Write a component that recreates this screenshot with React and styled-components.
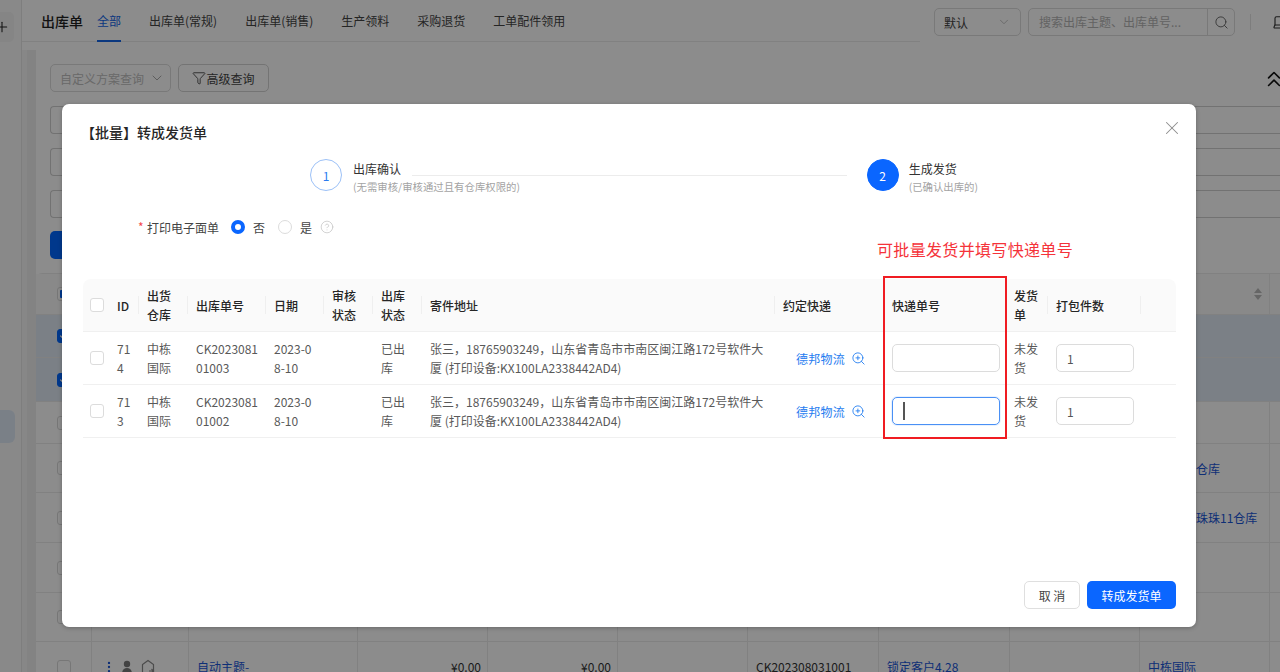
import React from "react";
import styled, { createGlobalStyle } from "styled-components";
import { Plus, ChevronDown, Search, Filter, ChevronsUp, Laptop, X, CircleHelp, ZoomIn, EllipsisVertical, Check } from "lucide-react";

const Global = createGlobalStyle`
  html, body { margin: 0; padding: 0; height: 100%; background: #fff; }
  * { box-sizing: border-box; }
  body { font-family: "Noto Sans CJK SC", "Noto Sans", sans-serif; font-size: 12px; color: #333; }
`;

const Page = styled.div`
  position: relative; width: 1280px; height: 672px; overflow: hidden;
  display: flex; background: #fff;
`;
const Rail = styled.aside`
  width: 22px; flex: none; display: flex; flex-direction: column;
  background: #fafafa; border-right: 1px solid #e6e6e6;
`;
const AddBox = styled.div`
  width: 14px; height: 30px; margin-top: 12px; display: flex; align-items: center;
  background: #f2f2f2; border-radius: 0 5px 5px 0; color: #222;
  svg { margin-left: -6px; flex: none; }
`;
const NavActive = styled.div`
  width: 15px; height: 33px; margin-top: 368px; background: #dfeaf6; border-radius: 0 6px 6px 0;
`;
const Main = styled.div`flex: 1; min-width: 0; display: flex; flex-direction: column; background: #f6f6f6;`;
const TopBar = styled.header`display: flex; height: 50px; background: #fff; flex: none; overflow: hidden;`;
const TabArea = styled.div`
  width: 898px; flex: none; height: 42px; padding-left: 19px; display: flex; align-items: flex-start;
  border-bottom: 1px solid #ececec;
`;
const PageTitle = styled.div`font-size: 14px; font-weight: 500; line-height: 42px; color: #222; margin-right: 14px;`;
const Tabs = styled.nav`display: flex; gap: 28px;`;
const Tab = styled.div`
  height: 42px; line-height: 42px; font-size: 12px; color: ${p => (p.$active ? "#1466e8" : "#444")};
  border-bottom: 2px solid ${p => (p.$active ? "#1466e8" : "transparent")};
`;
const TopTools = styled.div`display: flex; align-items: flex-start; padding: 8px 0 0 14px; gap: 7px; flex: none;`;
const Select = styled.div`
  width: 87px; height: 28px; border: 1px solid #dcdcdc; border-radius: 5px; display: flex;
  align-items: center; justify-content: space-between; padding: 0 9px; color: #444; font-size: 12px;
  svg { color: #aaa; }
`;
const SearchBox = styled.div`
  width: 207px; height: 28px; border: 1px solid #dcdcdc; border-radius: 5px; display: flex; align-items: stretch;
`;
const SearchText = styled.div`flex: 1; line-height: 26px; padding-left: 10px; color: #b5b5b5; font-size: 12px; border-right: 1px solid #dcdcdc; white-space: nowrap; overflow: hidden;`;
const SearchBtn = styled.div`width: 26px; display: flex; align-items: center; justify-content: center; color: #666;`;
const Divider = styled.div`width: 1px; height: 16px; margin: 6px 14px 0 8px; background: #e4e4e4;`;
const TopIcon = styled.div`color: #333; margin-top: 5px; flex: none;`;

const Panel = styled.section`
  flex: 1; margin-left: 5px; background: #fff; display: flex; flex-direction: column; min-height: 0;
  border-left: 9px solid #eeeeee;
`;
const Filters = styled.div`padding: 14px 0 0 14px; display: flex; flex-direction: column; flex: none;`;
const FilterTop = styled.div`display: flex; align-items: center; gap: 7px; height: 28px;`;
const SchemeSelect = styled.div`
  width: 121px; height: 28px; border: 1px solid #dcdcdc; border-radius: 5px; display: flex; align-items: center;
  justify-content: space-between; padding: 0 5px 0 9px; color: #c0c0c0; font-size: 12px;
`;
const AdvancedBtn = styled.div`
  width: 91px; height: 28px; border: 1px solid #d4d4d4; border-radius: 5px; display: flex; align-items: center;
  justify-content: center; color: #444; font-size: 12px;
`;
const Collapse = styled.div`margin-left: auto; color: #111; height: 26px; margin-right: -7px; margin-top: 2px;`;
const FieldRow = styled.div`height: 28px; margin-top: 14px; border: 1px solid #cfcfcf; border-right: 0; border-radius: 4px 0 0 4px; background: #fff;`;
const PrimaryGhost = styled.div`width: 60px; height: 28px; margin-top: 13px; border-radius: 5px; background: #0066ff;`;

const BgTable = styled.div`margin-top: 14px; display: flex; flex-direction: column; border-top: 1px solid #ececec; border-radius: 6px 0 0 0;`;
const BgRow = styled.div`
  display: grid; flex: none; height: ${p => p.$h}px;
  grid-template-columns: 56px 97px 169px 130px 130px 130px 131px 131px 130px 130px 10px;
  background: ${p => (p.$sel ? "#e0eaf4" : p.$head ? "#fafafa" : "#fff")};
  border-bottom: ${p => (p.$noLine ? "0" : "1px solid #ececec")};
`;
const BgCell = styled.div`
  display: flex; align-items: center; padding: ${p => (p.$flush ? "0" : p.$right ? "0 6px 0 8px" : "0 8px")}; white-space: nowrap; font-size: 12px; min-width: 0;
  justify-content: ${p => (p.$right ? "flex-end" : "flex-start")};
  color: ${p => (p.$link ? "#1a56d8" : "#333")};
  border-right: ${p => (p.$sel ? "0" : "1px solid #ececec")};
  gap: 8px;
`;
const BgCheck = styled.div`
  width: 14px; height: 14px; border-radius: 3px; margin-left: 21px; flex: none; display: flex; align-items: center; justify-content: center;
  border: 1px solid ${p => (p.$on ? "#0066ff" : "#d9d9d9")}; color: #fff;
  background: ${p => (p.$on ? "#0066ff" : "#fff")};
`;
const MixedDot = styled.span`width: 8px; height: 8px; border-radius: 1px; background: #0066ff;`;
const SortMark = styled.div`display: flex; flex-direction: column; gap: 2px; margin-left: auto; margin-right: 5px;`;
const SortTri = styled.i`
  display: block; width: 0; height: 0; border: 4px solid transparent; border-bottom-width: ${p => (p.$up ? "5px" : "0")};
  border-top-width: ${p => (p.$up ? "0" : "5px")};
  border-bottom-color: ${p => (p.$up ? "#bbb" : "transparent")}; border-top-color: ${p => (p.$up ? "transparent" : "#bbb")};
`;
const RowIcons = styled.div`
  display: flex; align-items: center; gap: 5px; margin-left: 10px; color: #777;
  svg:last-child { margin-left: 3px; }
`;

const Overlay = styled.div`position: absolute; inset: 0; background: rgba(0, 0, 0, 0.45);`;
const Modal = styled.div`
  position: relative; width: 1134px; height: 523px; margin: 104px 0 0 62px; background: #fff; border-radius: 7px;
  padding: 20px 20px 18px 21px; display: flex; flex-direction: column;
  box-shadow: 0 1px 4px rgba(0, 0, 0, 0.25);
`;
const ModalHead = styled.div`display: flex; justify-content: space-between; align-items: flex-start; height: 16px;`;
const ModalTitle = styled.h2`margin: 0 0 0 -2px; font-size: 14px; line-height: 16px; font-weight: 500; color: #262626;`;
const CloseBtn = styled.div`margin: -7px -7px 0 0; height: 22px; color: #8c8c8c; svg { display: block; }`;
const Steps = styled.div`margin: 19px 0 0 227px; width: 668px; display: flex; flex: none;`;
const Step = styled.div`display: flex; gap: ${p => (p.$grow ? 11 : 10)}px; flex: ${p => (p.$grow ? 1 : "none")}; margin-right: ${p => (p.$grow ? "20px" : "0")};`;
const StepDot = styled.div`
  width: 32px; height: 32px; border-radius: 50%; flex: none; display: flex; align-items: center; justify-content: center;
  font-size: 12px; background: ${p => (p.$on ? "#0a66ff" : "#fff")}; color: ${p => (p.$on ? "#fff" : "#2a7bf0")};
  border: 1px solid ${p => (p.$on ? "#0a66ff" : "#9cc1f7")};
`;
const StepText = styled.div`flex: 1; min-width: 0; display: flex; flex-direction: column;`;
const StepTitleRow = styled.div`display: flex; height: 20px; gap: 11px;`;
const StepTitle = styled.div`font-size: 12px; line-height: 20px; color: #333; white-space: nowrap;`;
const StepLine = styled.div`flex: 1; height: 1px; margin-top: 16px; background: #ececec;`;
const StepSub = styled.div`font-size: 10.4px; line-height: 14px; margin-top: 1px; color: #a3a3a3; white-space: nowrap;`;

const PrintRow = styled.div`margin: 23px 0 0 55px; height: 20px; display: flex; align-items: center; font-size: 12px; color: #444; flex: none;`;
const Req = styled.span`color: #f5484c; width: 9px; font-size: 12px; line-height: 20px;`;
const PrintLabel = styled.span`margin-right: 12px;`;
const Radio = styled.span`
  width: 14px; height: 14px; border-radius: 50%; flex: none; background: #fff; margin-right: 8px;
  border: ${p => (p.$on ? "4px solid #0a66ff" : "1px solid #dcdcdc")};
`;
const RadioText = styled.span`margin-right: ${p => p.$gap}px; color: #444;`;
const Help = styled.span`display: flex; color: #c0c0c0;`;

const DataTable = styled.table`
  margin-top: 42px; width: 1093px; table-layout: fixed; border-collapse: separate; border-spacing: 0; flex: none;
  font-size: 12px; line-height: 19px;
`;
const Th = styled.th`
  position: relative; height: 53px; padding: 0 8px; background: #fafafa; text-align: left; font-weight: 500; color: #262626;
  border-bottom: 1px solid #f0f0f0;
  &:first-child { border-radius: 8px 0 0 0; padding: 0 0 0 7px; }
  &:last-child { border-radius: 0 8px 0 0; }
  &::after {
    content: ""; position: absolute; right: 0; top: 17px; height: 18px; width: 1px;
    background: ${p => (p.$sep ? "#efefef" : "transparent")};
  }
`;
const Td = styled.td`
  height: 53px; padding: ${p => (p.$flush ? "0 0 0 7px" : p.$tight ? "0 6px 0 8px" : "0 8px")}; color: #595959; word-break: break-all;
  border-bottom: 1px solid #f0f0f0; text-align: ${p => (p.$center ? "center" : "left")};
`;
const Box = styled.span`display: block; width: 14px; height: 14px; border: 1px solid #dcdcdc; border-radius: 3px; background: #fff;`;
const Courier = styled.span`display: inline-flex; align-items: center; gap: 6px; padding-left: 3px; color: #1f7cf0; letter-spacing: 0.2px; svg { color: #1f7cf0; }`;
const InputBox = styled.div`
  width: ${p => p.$w}px; height: 28px; border-radius: 5px; display: flex; align-items: center; padding-left: 10px; color: #555;
  border: 1px solid ${p => (p.$focus ? "#4a90f5" : "#dcdcdc")}; background: #fff;
  box-shadow: ${p => (p.$focus ? "0 0 0 1px rgba(74, 144, 245, 0.12)" : "none")};
`;
const Caret = styled.span`width: 2px; height: 18px; background: #555;`;

const Annotation = styled.div`
  position: absolute; left: 815px; top: 134px; font-size: 16px; line-height: 22px; letter-spacing: 0.33px; color: #f5333a; white-space: nowrap;
`;
const RedFrame = styled.div`position: absolute; left: 821px; top: 172px; width: 124px; height: 163px; border: 2px solid #f01c22; pointer-events: none;`;

const Footer = styled.div`margin-top: auto; display: flex; justify-content: flex-end; gap: 7px; flex: none;`;
const FootBtn = styled.div`
  height: 28px; border-radius: 5px; display: flex; align-items: center; justify-content: center; font-size: 12px;
  width: ${p => p.$w}px; color: ${p => (p.$primary ? "#fff" : "#444")};
  background: ${p => (p.$primary ? "#0a66ff" : "#fff")};
  border: ${p => (p.$primary ? "0" : "1px solid #dfdfdf")};
`;
const SortSpot = styled.div`position: absolute; left: 1254px; top: 288px;`;

const widths = [26, 30, 49, 78, 58, 49, 49, 353, 109, 122, 42, 93, 35];
const heads = ["ID", "出货仓库", "出库单号", "日期", "审核状态", "出库状态", "寄件地址", "约定快递", "快递单号", "发货单", "打包件数", ""];
const addr = "张三，18765903249，山东省青岛市市南区闽江路172号软件大厦 (打印设备:KX100LA2338442AD4)";
const rows = [
  { id: "714", no: "CK202308101003" },
  { id: "713", no: "CK202308101002", focus: true },
];
const bgRows = [
  { h: 41, head: true },
  { h: 43, sel: true },
  { h: 44, sel: true },
  { h: 42 },
  { h: 49, warehouse: "中栋国际仓库" },
  { h: 50, warehouse: "珠珠珠珠珠珠11仓库" },
  { h: 50 },
  { h: 49 },
];

function HouseIcon() {
  return (
    <svg width="14" height="16" viewBox="0 0 14 16" fill="none" stroke="#8a8a8a" strokeWidth="1.2">
      <path d="M1.5 15V5.5L7 1.5l5.5 4V15" />
      <path d="M8 12h4.5M10.5 10l2 2-2 2" />
    </svg>
  );
}
function PersonIcon() {
  return (
    <svg width="12" height="14" viewBox="0 0 12 14" fill="#7a7a7a">
      <circle cx="6" cy="4" r="3.2" />
      <path d="M1 14c0-4 2-6 5-6s5 2 5 6z" />
    </svg>
  );
}

function Background() {
  return (
    <>
      <Rail>
        <AddBox><Plus size={16} strokeWidth={1.6} /></AddBox>
        <NavActive />
      </Rail>
      <Main>
        <TopBar>
          <TabArea>
            <PageTitle>出库单</PageTitle>
            <Tabs>
              <Tab $active>全部</Tab>
              <Tab>出库单(常规)</Tab>
              <Tab>出库单(销售)</Tab>
              <Tab>生产领料</Tab>
              <Tab>采购退货</Tab>
              <Tab>工单配件领用</Tab>
            </Tabs>
          </TabArea>
          <TopTools>
            <Select>默认<ChevronDown size={14} strokeWidth={1.2} /></Select>
            <SearchBox>
              <SearchText>搜索出库主题、出库单号...</SearchText>
              <SearchBtn><Search size={15} strokeWidth={1.5} /></SearchBtn>
            </SearchBox>
            <Divider />
            <TopIcon><Laptop size={18} strokeWidth={1.5} /></TopIcon>
          </TopTools>
        </TopBar>
        <Panel>
          <Filters>
            <FilterTop>
              <SchemeSelect>自定义方案查询<ChevronDown size={16} strokeWidth={1.5} color="#aaa" /></SchemeSelect>
              <AdvancedBtn><Filter size={14} strokeWidth={1.5} />高级查询</AdvancedBtn>
              <Collapse><ChevronsUp size={26} strokeWidth={1.5} /></Collapse>
            </FilterTop>
            <FieldRow />
            <FieldRow />
            <FieldRow />
            <PrimaryGhost />
          </Filters>
          <BgTable>
            {bgRows.map((r, i) => (
              <BgRow key={i} $h={r.h} $sel={r.sel} $head={r.head}>
                <BgCell $sel={r.sel} $flush>
                  {r.sel ? <BgCheck $on><Check size={10} strokeWidth={3} /></BgCheck> : <BgCheck>{i === 0 && <MixedDot />}</BgCheck>}
                </BgCell>
                <BgCell $sel={r.sel} />
                <BgCell $sel={r.sel} />
                <BgCell $sel={r.sel} />
                <BgCell $sel={r.sel} />
                <BgCell $sel={r.sel} />
                <BgCell $sel={r.sel} />
                <BgCell $sel={r.sel} />
                <BgCell $sel={r.sel} />
                <BgCell $sel={r.sel} $link>{r.warehouse}</BgCell>
                <BgCell $sel={r.sel} />
              </BgRow>
            ))}
            <BgRow $h={49} $noLine>
              <BgCell $flush><BgCheck /></BgCell>
              <BgCell $flush>
                <RowIcons>
                  <EllipsisVertical size={14} color="#1a56d8" />
                  <PersonIcon />
                  <HouseIcon />
                </RowIcons>
              </BgCell>
              <BgCell $link>自动主题-</BgCell>
              <BgCell $right>¥0.00</BgCell>
              <BgCell $right>¥0.00</BgCell>
              <BgCell />
              <BgCell>CK202308031001</BgCell>
              <BgCell $link>锁定客户4.28</BgCell>
              <BgCell />
              <BgCell $link>中栋国际</BgCell>
              <BgCell />
            </BgRow>
          </BgTable>
        </Panel>
      </Main>
      <SortSpot>
        <SortMark>
          <SortTri $up />
          <SortTri />
        </SortMark>
      </SortSpot>
    </>
  );
}

export default function App() {
  return (
    <Page>
      <Global />
      <Background />
      <Overlay>
        <Modal>
          <ModalHead>
            <ModalTitle>【批量】转成发货单</ModalTitle>
            <CloseBtn><X size={22} strokeWidth={1.1} /></CloseBtn>
          </ModalHead>
          <Steps>
            <Step $grow>
              <StepDot>1</StepDot>
              <StepText>
                <StepTitleRow>
                  <StepTitle>出库确认</StepTitle>
                  <StepLine />
                </StepTitleRow>
                <StepSub>(无需审核/审核通过且有仓库权限的)</StepSub>
              </StepText>
            </Step>
            <Step>
              <StepDot $on>2</StepDot>
              <StepText>
                <StepTitleRow><StepTitle>生成发货</StepTitle></StepTitleRow>
                <StepSub>(已确认出库的)</StepSub>
              </StepText>
            </Step>
          </Steps>
          <PrintRow>
            <Req>*</Req>
            <PrintLabel>打印电子面单</PrintLabel>
            <Radio $on />
            <RadioText $gap={13}>否</RadioText>
            <Radio />
            <RadioText $gap={8}>是</RadioText>
            <Help><CircleHelp size={14} strokeWidth={1.2} /></Help>
          </PrintRow>
          <DataTable>
            <colgroup>
              {widths.map((w, i) => <col key={i} style={{ width: w }} />)}
            </colgroup>
            <thead>
              <tr>
                <Th><Box /></Th>
                {heads.map((h, i) => <Th key={i} $sep={i < heads.length - 1}>{h}</Th>)}
              </tr>
            </thead>
            <tbody>
              {rows.map(r => (
                <tr key={r.id}>
                  <Td $flush><Box /></Td>
                  <Td>{r.id}</Td>
                  <Td>中栋国际</Td>
                  <Td $tight>{r.no}</Td>
                  <Td>2023-08-10</Td>
                  <Td />
                  <Td>已出库</Td>
                  <Td>{addr}</Td>
                  <Td $center><Courier>德邦物流<ZoomIn size={15} strokeWidth={1.4} /></Courier></Td>
                  <Td><InputBox $w={108} $focus={r.focus}>{r.focus && <Caret />}</InputBox></Td>
                  <Td>未发货</Td>
                  <Td><InputBox $w={78}>1</InputBox></Td>
                  <Td />
                </tr>
              ))}
            </tbody>
          </DataTable>
          <Footer>
            <FootBtn $w={56}>取 消</FootBtn>
            <FootBtn $w={89} $primary>转成发货单</FootBtn>
          </Footer>
          <Annotation>可批量发货并填写快递单号</Annotation>
          <RedFrame />
        </Modal>
      </Overlay>
    </Page>
  );
}
